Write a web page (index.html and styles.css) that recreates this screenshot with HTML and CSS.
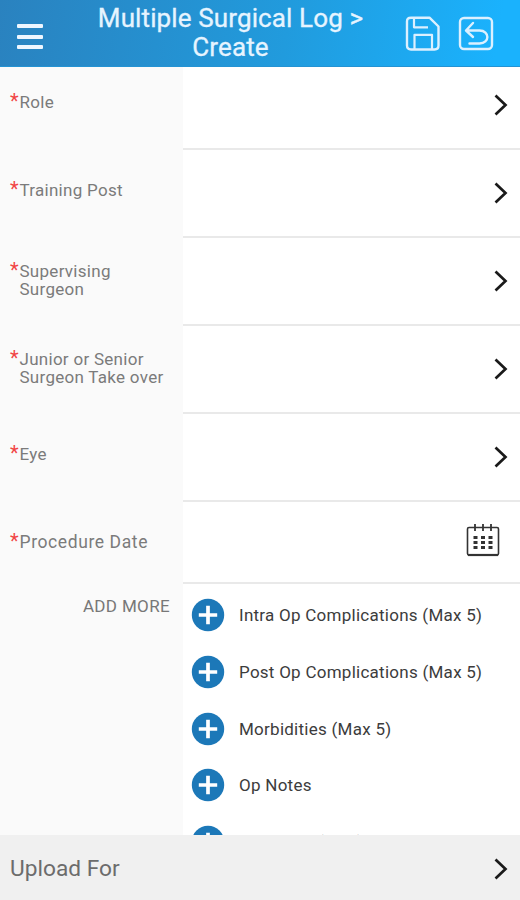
FILE: index.html
```
<!DOCTYPE html>
<html lang="en">
<head>
<meta charset="utf-8">
<title>Multiple Surgical Log</title>
<link rel="stylesheet" href="styles.css">
</head>
<body>
<svg class="defs" width="0" height="0">
  <symbol id="chevron" viewBox="0 0 16 24"><path d="M2.5 2.5 L12.5 12 L2.5 21.5" fill="none" stroke="#1a1a1a" stroke-width="2.7"/></symbol>
  <symbol id="plus" viewBox="0 0 34 34"><circle cx="17" cy="17" r="16.2" fill="#1c78b8"/><path d="M17 7.8v18.4M7.8 17h18.4" stroke="#fff" stroke-width="3.7"/></symbol>
</svg>
<div class="screen">
  <header class="header">
    <button class="menu" aria-label="Menu"><i></i><i></i><i></i></button>
    <h1 class="title">Multiple Surgical Log &gt;<br>Create</h1>
    <div class="actions">
      <svg width="36" height="36" viewBox="0 0 36 36" fill="none" stroke="#dcf0ff" stroke-width="2.4" stroke-linejoin="round"><path d="M6 1.7H24.5L33.5 10.5V29.5Q33.5 33.5 29.5 33.5H6Q2 33.5 2 29.5V5.5Q2 1.7 6 1.7Z"/><path d="M9 2V11.3H23M9.5 33V18.8H27V33" stroke-width="2.2"/></svg>
      <svg width="36" height="36" viewBox="0 0 36 36" fill="none" stroke="#dcf0ff" stroke-width="2.4" stroke-linejoin="round" stroke-linecap="round"><rect x="2" y="2" width="32" height="31" rx="4"/><path d="M15 7L8 14.5L15 21M9 14.5H21.5C32 14.5 32 27.5 21.5 27.5H11.5"/></svg>
    </div>
  </header>
  <main class="form">
    <section class="row first"><div class="label"><span class="req">*</span><span>Role</span></div><div class="field"><svg class="chev"><use href="#chevron"/></svg></div></section>
    <section class="row"><div class="label"><span class="req">*</span><span>Training Post</span></div><div class="field"><svg class="chev"><use href="#chevron"/></svg></div></section>
    <section class="row"><div class="label two"><span class="req">*</span><span>Supervising<br>Surgeon</span></div><div class="field"><svg class="chev"><use href="#chevron"/></svg></div></section>
    <section class="row"><div class="label two"><span class="req">*</span><span>Junior or Senior<br>Surgeon Take over</span></div><div class="field"><svg class="chev"><use href="#chevron"/></svg></div></section>
    <section class="row"><div class="label"><span class="req">*</span><span>Eye</span></div><div class="field"><svg class="chev"><use href="#chevron"/></svg></div></section>
    <section class="row date"><div class="label"><span class="req">*</span><span>Procedure Date</span></div><div class="field">
      <svg class="calendar" viewBox="0 0 34 34" fill="none" stroke="#333"><rect x="1.5" y="4.5" width="31" height="27.5" rx="1.5" stroke-width="1.6"/><path d="M2 32H32" stroke-width="2.2"/><path d="M9 1V8M17 1V8M25 1V8" stroke-width="1.8"/><path d="M7.5 14.5h4M15 14.5h4M22.5 14.5h4M7.5 19.5h4M15 19.5h4M22.5 19.5h4M7.5 24.5h4M15 24.5h4M22.5 24.5h4" stroke-width="2.8"/></svg>
    </div></section>
    <section class="more">
      <div class="more-label">ADD MORE</div>
      <ul class="options">
        <li><svg class="add"><use href="#plus"/></svg><span>Intra Op Complications (Max 5)</span></li>
        <li><svg class="add"><use href="#plus"/></svg><span>Post Op Complications (Max 5)</span></li>
        <li><svg class="add"><use href="#plus"/></svg><span>Morbidities (Max 5)</span></li>
        <li><svg class="add"><use href="#plus"/></svg><span>Op Notes</span></li>
        <li><svg class="add"><use href="#plus"/></svg><span>Summary (Max)</span></li>
      </ul>
    </section>
  </main>
  <footer class="footer"><span>Upload For</span><svg class="chev"><use href="#chevron"/></svg></footer>
</div>
</body>
</html>
```

FILE: styles.css
```
* { box-sizing: border-box; }
body { margin: 0; font-family: Roboto, "Liberation Sans", sans-serif; background: #fff; }
.defs { display: none; }
.screen { width: 520px; height: 900px; display: flex; flex-direction: column; overflow: hidden; }
.header { height: 67px; flex: none; display: flex; align-items: flex-start; justify-content: space-between; padding: 0 26px 0 17px; background: linear-gradient(100deg, #2a82bf 0%, #219bdd 55%, #1ab2fd 95%); border-bottom: 1px solid #2493d3; }
.menu { width: 26px; height: 25px; margin: 24px 0 0; padding: 0; border: 0; background: none; display: flex; flex-direction: column; justify-content: space-between; }
.menu i { height: 4px; width: 26px; background: #eef6ff; border-radius: 1px; }
.title { margin: 4px 0 0 13px; width: 300px; font-weight: 400; font-size: 26px; letter-spacing: .12px; line-height: 29px; text-align: center; color: #e6f4ff; -webkit-text-stroke: .3px #e6f4ff; white-space: nowrap; }
.actions { display: flex; gap: 17px; margin-top: 16px; }
.actions svg { display: block; }
.form { flex: 1; min-height: 0; overflow: hidden; }
.row { display: flex; height: 88px; }
.row.first { height: 83px; }
.row.date { height: 82px; }
.label { width: 183px; flex: none; background: #fafafa; display: flex; flex-wrap: wrap; align-items: baseline; align-content: center; padding: 0 0 8px 10px; font-size: 17px; line-height: 17.6px; color: #7b7b7b; letter-spacing: .28px; }
.label.two { padding-bottom: 4px; }
.first .label { padding-bottom: 13px; }
.date .label { padding-bottom: 2px; font-size: 17.5px; letter-spacing: .6px; }
.req { width: 9.5px; flex: none; color: #f14545; font-size: 20px; letter-spacing: 0; }
.field { flex: 1; border-bottom: 2px solid #e9e9e9; display: flex; align-items: center; justify-content: flex-end; padding-right: 11px; }
.first .field { padding-bottom: 5px; }
.chev { width: 16px; height: 24px; flex: none; }
.calendar { width: 34px; height: 34px; margin: 0 9px 4px 0; }
.more { display: flex; }
.more-label { width: 183px; flex: none; min-height: 251px; background: #fafafa; color: #777; font-size: 17px; letter-spacing: .35px; line-height: 20px; text-align: right; padding: 12px 13px 0 0; }
.options { margin: 0; padding: 3px 0 0 8px; list-style: none; font-size: 17px; color: #3c3c3c; letter-spacing: .26px; }
.options li { height: 56.7px; display: flex; align-items: center; white-space: nowrap; }
.add { width: 34px; height: 34px; margin-right: 14px; }
.footer { height: 65px; flex: none; display: flex; align-items: center; justify-content: space-between; padding: 2px 11px 0 10px; background: #f0f0f0; color: #6c6c6c; font-size: 22.7px; }
```
